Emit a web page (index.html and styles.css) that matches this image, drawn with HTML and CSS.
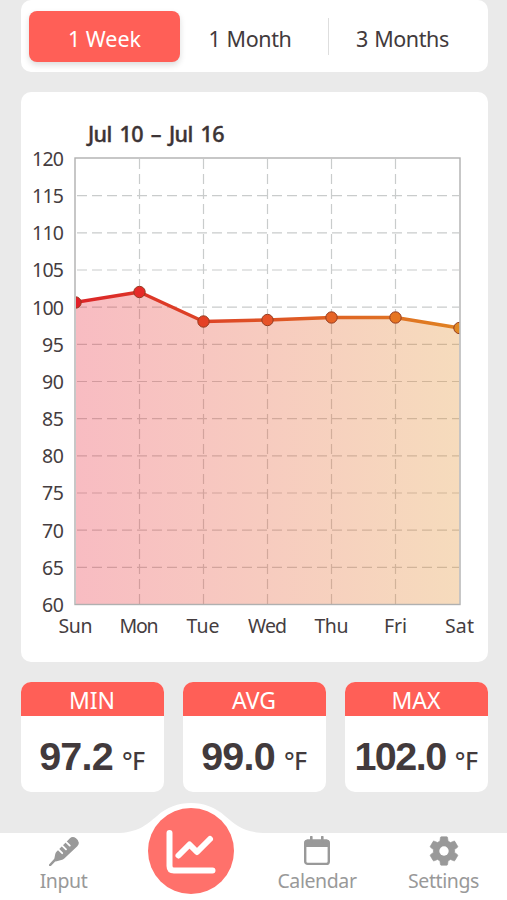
FILE: index.html
```html
<!DOCTYPE html>
<html lang="en">
<head>
    <meta charset="UTF-8">
    <meta name="viewport" content="width=device-width, initial-scale=1.0">
    <title>Temperature Chart</title>
    <link rel="stylesheet" href="styles.css">
</head>
<body>
    <main class="content">
        <div class="tabs">
            <button class="tab active">1 Week</button>
            <button class="tab month">1 Month</button>
            <button class="tab months">3 Months</button>
        </div>

        <section class="chart-card">
            <svg class="chart" width="467" height="569" viewBox="21 92 467 569">
                <defs>
                    <linearGradient id="line" gradientUnits="userSpaceOnUse" x1="75" y1="0" x2="459" y2="0">
                        <stop offset="0" stop-color="#dc2428"/>
                        <stop offset="1" stop-color="#e08222"/>
                    </linearGradient>
                    <linearGradient id="area" gradientUnits="userSpaceOnUse" x1="75" y1="0" x2="459" y2="0">
                        <stop offset="0" stop-color="#e8263a"/>
                        <stop offset="1" stop-color="#e28c28"/>
                    </linearGradient>
                    <clipPath id="plot"><rect x="76" y="158" width="383.5" height="446"/></clipPath>
                </defs>

                <text class="chart-title" x="88" y="142" textLength="136.5">Jul 10 – Jul 16</text>

                <path class="grid" d="M77 195.7H459M77 232.8H459M77 270H459M77 307.2H459M77 344.3H459M77 381.5H459M77 418.7H459M77 455.8H459M77 493H459M77 530.2H459M77 567.3H459"/>
                <path class="grid" d="M139.5 604V158M203.5 604V158M267.5 604V158M331.5 604V158M395.5 604V158"/>

                <g clip-path="url(#plot)">
                    <path fill="url(#area)" fill-opacity=".31" d="M75 302.5L139.5 292L203.5 321.5L267.5 320L331.5 317.5L395.5 317.5L459.5 328V604H75Z"/>
                    <path fill="none" stroke="url(#line)" stroke-width="3.4" stroke-linejoin="round" d="M75 302.5L139.5 292L203.5 321.5L267.5 320L331.5 317.5L395.5 317.5L459.5 328"/>
                    <g class="dots">
                        <circle cx="75.5" cy="302.5" r="5.7" fill="#e3202a"/>
                        <circle cx="139.5" cy="292" r="5.7" fill="#e62a28"/>
                        <circle cx="203.5" cy="321.5" r="5.7" fill="#e44024"/>
                        <circle cx="267.5" cy="320" r="5.7" fill="#e65228"/>
                        <circle cx="331.5" cy="317.5" r="5.7" fill="#e66426"/>
                        <circle cx="395.5" cy="317.5" r="5.7" fill="#e67622"/>
                        <circle cx="459.5" cy="328" r="5.7" fill="#e08824"/>
                    </g>
                </g>
                <rect class="frame" x="75" y="158" width="385" height="446.5"/>

                <g class="axis" text-anchor="end">
                    <text x="64" y="166" textLength="32">120</text>
                    <text x="64" y="203" textLength="32">115</text>
                    <text x="64" y="240" textLength="32">110</text>
                    <text x="64" y="277" textLength="32">105</text>
                    <text x="64" y="314.5" textLength="32">100</text>
                    <text x="64" y="351.5" textLength="22">95</text>
                    <text x="64" y="388.5" textLength="22">90</text>
                    <text x="64" y="426" textLength="22">85</text>
                    <text x="64" y="463" textLength="22">80</text>
                    <text x="64" y="500" textLength="22">75</text>
                    <text x="64" y="537.5" textLength="22">70</text>
                    <text x="64" y="574.5" textLength="22">65</text>
                    <text x="64" y="611.5" textLength="22">60</text>
                </g>
                <g class="axis" text-anchor="middle">
                    <text x="75.5" y="632.5" textLength="34">Sun</text>
                    <text x="139" y="632.5" textLength="39">Mon</text>
                    <text x="203" y="632.5" textLength="33">Tue</text>
                    <text x="267.5" y="632.5" textLength="39">Wed</text>
                    <text x="331.5" y="632.5" textLength="34">Thu</text>
                    <text x="395.5" y="632.5" textLength="23">Fri</text>
                    <text x="459.5" y="632.5" textLength="29">Sat</text>
                </g>
            </svg>
        </section>

        <section class="stats">
            <div class="stat">
                <h2>MIN</h2>
                <p><b>97.2</b><span>°F</span></p>
            </div>
            <div class="stat">
                <h2>AVG</h2>
                <p><b>99.0</b><span>°F</span></p>
            </div>
            <div class="stat max">
                <h2>MAX</h2>
                <p><b>102.0</b><span>°F</span></p>
            </div>
        </section>
    </main>

    <nav class="navbar">
        <svg class="hump" width="150" height="34" viewBox="0 0 150 34">
            <path fill="#fff" d="M0 34V31C22 31 30 23 41 14C51 5 62 1 75 1S99 5 109 14C120 23 128 31 150 31V34Z"/>
        </svg>
        <a class="nav-item">
            <svg width="30" height="30" viewBox="0 0 30 30">
                <path d="M1.2 29L6 23.8" stroke="#999" stroke-width="2.5" stroke-linecap="round"/>
                <path fill="#999" d="M5 24.5L6.2 18.3Q6.5 16.7 7.7 15.5L20.7 2.5Q23.5-.2 27 2.2Q32 6 28.3 10.3L15.3 22.6Q14 23.8 12.3 24L6.8 25.5Z"/>
                <path d="M9.4 13.4L13.2 17.2M13.2 9.6L17 13.4M17 5.8L20.8 9.6" stroke="#fff" stroke-width="1.8" stroke-linecap="round"/>
            </svg>
            <span>Input</span>
        </a>
        <a class="nav-chart">
            <svg width="86" height="86" viewBox="0 0 86 86" fill="none" stroke="#fff" stroke-width="6" stroke-linecap="round" stroke-linejoin="round">
                <path d="M21.5 25V58Q21.5 62.5 26 62.5H64.5"/>
                <path d="M30.5 47.5L41.5 36.5L49 44L62 31"/>
            </svg>
        </a>
        <a class="nav-item calendar">
            <svg width="30" height="30" viewBox="0 0 30 30">
                <rect x="3.2" y="4.7" width="23.6" height="23.2" rx="2.5" fill="none" stroke="#999" stroke-width="2.4"/>
                <path fill="#999" d="M2.5 6Q3 3.5 5.5 3.5H24.5Q27 3.5 27.5 6V11H2.5Z"/>
                <path d="M9.3 1V5M20.3 1V5" stroke="#999" stroke-width="2.6" stroke-linecap="round"/>
            </svg>
            <span>Calendar</span>
        </a>
        <a class="nav-item settings">
            <svg width="34" height="34" viewBox="0 0 24 24">
                <path fill="#999" stroke="#999" stroke-width=".5" stroke-linejoin="round" d="M19.43 12.98c.04-.32.07-.64.07-.98s-.03-.66-.07-.98l2.11-1.65c.19-.15.24-.42.12-.64l-2-3.46c-.12-.22-.39-.3-.61-.22l-2.49 1c-.52-.4-1.08-.73-1.69-.98l-.38-2.65C14.46 2.18 14.25 2 14 2h-4c-.25 0-.46.18-.49.42l-.38 2.65c-.61.25-1.17.59-1.69.98l-2.49-1c-.23-.09-.49 0-.61.22l-2 3.46c-.13.22-.07.49.12.64l2.11 1.65c-.04.32-.07.65-.07.98s.03.66.07.98l-2.11 1.65c-.19.15-.24.42-.12.64l2 3.46c.12.22.39.3.61.22l2.49-1c.52.4 1.08.73 1.69.98l.38 2.65c.03.24.24.42.49.42h4c.25 0 .46-.18.49-.42l.38-2.65c.61-.25 1.17-.59 1.69-.98l2.49 1c.23.09.49 0 .61-.22l2-3.46c.12-.22.07-.49-.12-.64l-2.11-1.65z"/>
                <circle cx="12" cy="12" r="3.3" fill="#fff"/>
            </svg>
            <span>Settings</span>
        </a>
    </nav>
</body>
</html>
```
FILE: styles.css
```css
* {
    box-sizing: border-box;
}
body {
    margin: 0;
    height: 900px;
    display: flex;
    flex-direction: column;
    overflow: hidden;
    background: #eaeaea;
    color: #423a3c;
    font-family: "Noto Sans", sans-serif;
}
.content {
    flex: 1;
    padding: 0 19.5px 0 20.5px;
}

/* period tabs */
.tabs {
    display: grid;
    grid-template-columns: 151px 148px 1fr;
    height: 72px;
    padding: 11px 8.5px 10px;
    background: #fff;
    border-radius: 10px;
}
.tab {
    position: relative;
    padding: 4px 0 0;
    border: none;
    border-radius: 8px;
    background: none;
    color: #423a3c;
    font: 21.5px "Noto Sans", sans-serif;
    white-space: nowrap;
}
.tab.active {
    background: #ff5f57;
    color: #fff;
    box-shadow: 0 3px 6px rgba(0, 0, 0, 0.14);
}
.tab.month {
    padding-right: 8px;
    letter-spacing: -0.4px;
    word-spacing: 1px;
}
.tab.months {
    padding-right: 2px;
    letter-spacing: -0.4px;
    word-spacing: 1px;
}
.tab.months::before {
    content: "";
    position: absolute;
    left: 0;
    top: 7px;
    width: 1px;
    height: 37px;
    background: #dedede;
}

/* chart */
.chart-card {
    height: 569.5px;
    margin-top: 20px;
    background: #fff;
    border-radius: 10px;
}
.chart {
    display: block;
}
.chart-title {
    font-size: 21.5px;
    font-weight: 500;
    word-spacing: 3px;
    fill: #3c3436;
    stroke: #3c3436;
    stroke-width: 0.4;
}
.axis {
    font-size: 19.5px;
    fill: #453d3f;
}
.grid {
    fill: none;
    stroke: #c9cccc;
    stroke-width: 1.2;
    stroke-dasharray: 10 5;
}
.frame {
    fill: none;
    stroke: #b0b0b0;
    stroke-width: 1.4;
}
.dots {
    stroke: #943c20;
    stroke-width: 1;
}

/* min, avg, max */
.stats {
    display: grid;
    grid-template-columns: repeat(3, 1fr);
    gap: 19px;
    margin-top: 20px;
}
.stat {
    height: 110px;
    overflow: hidden;
    background: #fff;
    border-radius: 10px;
}
.stat h2 {
    height: 34px;
    margin: 0;
    background: #ff5f57;
    color: #fff;
    font-size: 23px;
    font-weight: 400;
    line-height: 37px;
    text-align: center;
}
.stat p {
    display: flex;
    justify-content: center;
    align-items: baseline;
    gap: 9px;
    margin: 0;
    font-family: "Liberation Sans", sans-serif;
    line-height: 80px;
    white-space: nowrap;
}
.stat b {
    font-size: 39.5px;
    letter-spacing: -0.8px;
}
.stat.max b {
    letter-spacing: -1.5px;
}
.stat span {
    font-family: "Noto Sans", sans-serif;
    font-size: 25px;
    font-weight: 500;
    letter-spacing: -0.5px;
}

/* bottom bar */
.navbar {
    position: relative;
    display: grid;
    grid-template-columns: 127px 127px 126px 127px;
    height: 67px;
    background: #fff;
}
.hump {
    position: absolute;
    left: 115.5px;
    top: -31px;
}
.nav-item {
    display: flex;
    flex-direction: column;
    align-items: center;
    padding-top: 3px;
    color: #999;
    font-size: 19.5px;
    letter-spacing: -0.4px;
    line-height: 30px;
}
.nav-item svg {
    flex: none;
}
.nav-item.settings {
    padding-top: 1px;
}
.settings svg {
    margin-bottom: -2px;
}
.nav-chart {
    position: relative;
    width: 86px;
    height: 86px;
    margin: -25px auto 0;
    border-radius: 50%;
    background: #ff716b;
}
.nav-chart svg {
    display: block;
}
```
